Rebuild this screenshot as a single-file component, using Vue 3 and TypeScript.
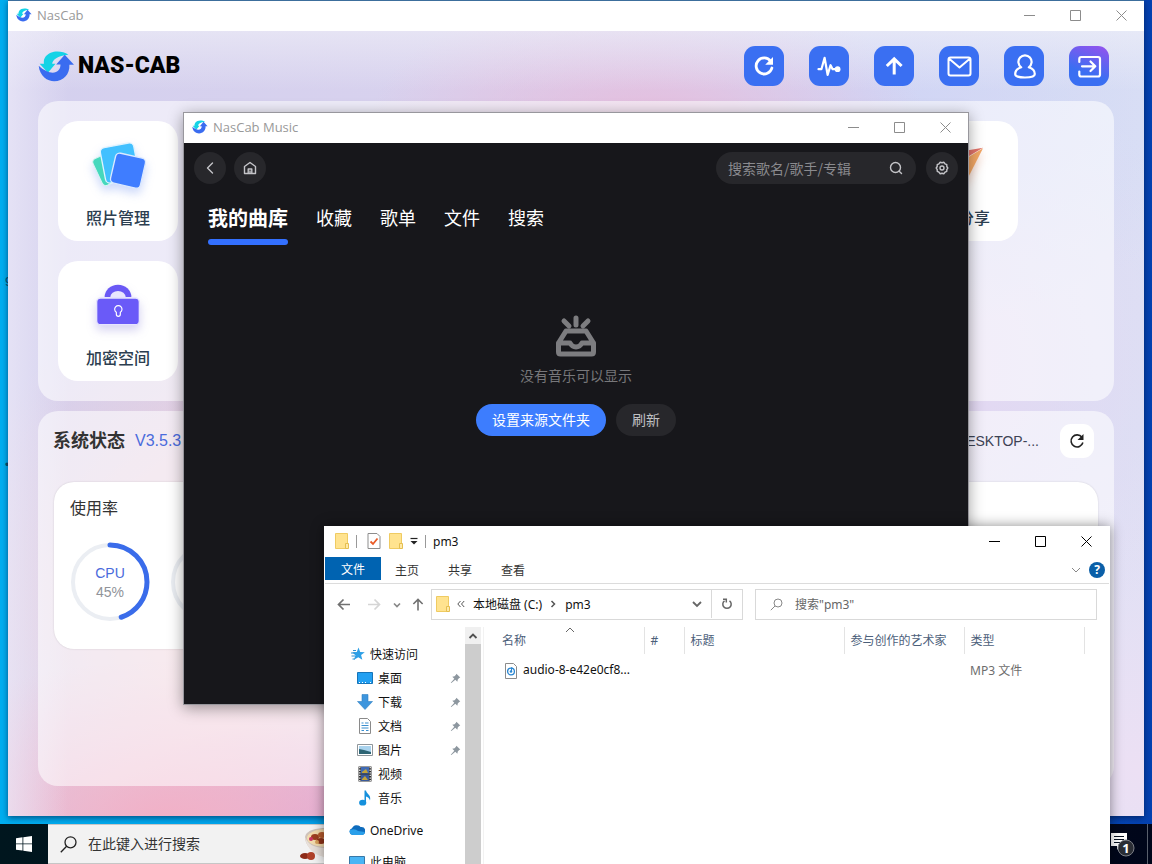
<script setup lang="ts">
import { ref } from 'vue'

interface NavItem { id: string; label: string; pinned: boolean }

const tabs = ['我的曲库', '收藏', '歌单', '文件', '搜索']
const activeTab = ref('我的曲库')
const musicQuery = ref('')
const fileQuery = ref('')
const taskQuery = ref('')
const cpu = ref(45)
const ringLength = 2 * Math.PI * 37

const navItems: NavItem[] = [
  { id: 'desktop', label: '桌面', pinned: true },
  { id: 'download', label: '下载', pinned: true },
  { id: 'document', label: '文档', pinned: true },
  { id: 'picture', label: '图片', pinned: true },
  { id: 'video', label: '视频', pinned: false },
  { id: 'music', label: '音乐', pinned: false },
]
const ribbonTabs = ['主页', '共享', '查看']
const headerActions = ['refresh', 'pulse', 'upload', 'mail', 'user', 'exit']
const actionLabels: Record<string, string> = {
  refresh: '刷新', pulse: '监控', upload: '上传', mail: '消息', user: '用户', exit: '退出',
}
</script>

<template>
  <div class="desktop">
    <span class="shortcut shortcut-a">9</span>
    <span class="shortcut shortcut-b">•</span>

    <section class="window nas">
      <header class="titlebar">
        <svg class="app-mark" viewBox="113 151 112 94">
          <path fill="#14d3e6" d="M205 162C185 148 150 148 136 168C130 176 130 184 131 190H118L143 217L166 190H156C156 178 172 164 205 162Z" />
          <path fill="#3a6cf0" d="M115 196C118 228 142 243 162 243C190 243 210 222 208 193H222L194 162L168 192H181C182 215 155 232 115 196Z" />
        </svg>
        <span class="title">NasCab</span>
        <div class="caption">
          <button aria-label="最小化"><svg viewBox="0 0 11 11"><path d="M0 5.5H11" /></svg></button>
          <button aria-label="最大化"><svg viewBox="0 0 11 11"><path d="M.5 .5H10.5V10.5H.5Z" /></svg></button>
          <button aria-label="关闭"><svg viewBox="0 0 11 11"><path d="M.5 .5L10.5 10.5M10.5 .5L.5 10.5" /></svg></button>
        </div>
      </header>

      <div class="nas-body">
        <div class="nas-top">
          <svg class="brand-mark" viewBox="113 151 112 94">
            <path fill="#14d3e6" d="M205 162C185 148 150 148 136 168C130 176 130 184 131 190H118L143 217L166 190H156C156 178 172 164 205 162Z" />
            <path fill="#3a6cf0" d="M115 196C118 228 142 243 162 243C190 243 210 222 208 193H222L194 162L168 192H181C182 215 155 232 115 196Z" />
          </svg>
          <h1 class="brand">NAS-CAB</h1>
          <nav class="actions">
            <button v-for="a in headerActions" :key="a" class="action" :class="{ exit: a === 'exit' }" :aria-label="actionLabels[a]">
              <svg viewBox="0 0 40 40">
                <g v-if="a === 'refresh'">
                  <path d="M26.6 15.2A8 8 0 1 0 27.9 22" stroke-width="2.8" />
                  <path d="M29 11V18.8H21.2Z" class="solid" />
                </g>
                <g v-else-if="a === 'pulse'">
                  <path d="M9.5 23.2H12.4L15.6 11.8L18.6 28.8L21.6 19.2L23.6 23.2H28" stroke-width="2.2" />
                  <circle cx="28.6" cy="23.2" r="2.9" class="solid" />
                </g>
                <path v-else-if="a === 'upload'" d="M20.2 28.5V13M12.8 20L20.2 12.8L27.6 20" stroke-width="3" stroke-linecap="butt" stroke-linejoin="miter" />
                <path v-else-if="a === 'mail'" d="M11.5 11.5H29.5Q31.5 11.5 31.5 13.5V27.5Q31.5 29.5 29.5 29.5H11.5Q9.5 29.5 9.5 27.5V13.5Q9.5 11.5 11.5 11.5M10.5 13L20.5 21.5L30.5 13" stroke-width="2" />
                <path v-else-if="a === 'user'" d="M17.2 21.3A6.6 6.6 0 1 1 24.8 21.3C28.8 22.6 30.8 25 30.8 28C30.8 30.4 27.5 31.5 21 31.5S11.2 30.4 11.2 28C11.2 25 13.2 22.6 17.2 21.3Z" stroke-width="2.2" />
                <path v-else d="M10.3 16V13Q10.3 11 12.3 11H29Q31 11 31 13V28.5Q31 30.5 29 30.5H12.3Q10.3 30.5 10.3 28.5V25.5M13 20.3H26M21.5 15.5L26.3 20.3L21.5 25" stroke-width="2.2" />
              </svg>
            </button>
          </nav>
        </div>

        <div class="panel apps">
          <a href="#" class="tile">
            <svg viewBox="264 408 180 180">
              <rect x="291" y="464" width="46" height="88" rx="12" fill="#45d8bd" stroke="#d9f5f2" stroke-width="3" transform="rotate(-25 314 508)" />
              <rect x="308" y="432" width="102" height="108" rx="14" fill="#42c0ff" stroke="#dff3ff" stroke-width="4" transform="rotate(-11 359 486)" />
              <rect x="338" y="463" width="92" height="92" rx="13" fill="#3f7dff" stroke="#dbe9ff" stroke-width="4" transform="rotate(13 384 509)" />
            </svg>
            <span>照片管理</span>
          </a>
          <a href="#" class="tile share">
            <svg viewBox="624 408 180 180">
              <path d="M789 440L660 462L706 490Z" fill="#e2736a" />
              <path d="M789 442L736 546L706 492Z" fill="#f3a765" />
            </svg>
            <span>文件分享</span>
          </a>
          <a href="#" class="tile">
            <svg class="violet" viewBox="264 78 180 180">
              <path d="M314 138A40 37 0 0 1 394 138Z" fill="#6a58f5" />
              <path d="M331 138A23 18 0 0 1 377 138Z" fill="#e9e6fd" />
              <rect x="290" y="141" width="128" height="80" rx="12" fill="#6a5af8" stroke="#e6e4ff" stroke-width="4" />
              <path d="M349 184A11 11 0 1 1 361 184V190Q361 196 355 196T349 190Z" fill="none" stroke="#fff" stroke-width="3.5" />
            </svg>
            <span>加密空间</span>
          </a>
        </div>

        <div class="panel status">
          <div class="status-head">
            <h2>系统状态</h2>
            <span class="version">V3.5.3</span>
            <span class="host">DESKTOP-...</span>
            <button class="reload" aria-label="刷新状态">
              <svg viewBox="0 0 18 18"><path d="M13.9 5.3A6 6 0 1 0 14.9 10.5" fill="none" stroke="#222" stroke-width="1.6" /><path d="M15.5 2V8H9.5Z" fill="#222" /></svg>
            </button>
          </div>
          <div class="usage">
            <h3>使用率</h3>
            <div class="rings">
              <div class="ring">
                <svg viewBox="0 0 80 80">
                  <circle cx="40" cy="40" r="37" class="track" />
                  <circle cx="40" cy="40" r="37" class="value" :stroke-dasharray="`${ringLength * cpu / 100} ${ringLength}`" transform="rotate(-90 40 40)" />
                </svg>
                <div class="ring-text"><span class="ring-name">CPU</span><span>{{ cpu }}%</span></div>
              </div>
              <div class="ring">
                <svg viewBox="0 0 80 80"><circle cx="40" cy="40" r="37" class="track" /></svg>
              </div>
            </div>
          </div>
        </div>
      </div>
    </section>

    <footer class="taskbar">
      <button class="start" aria-label="开始">
        <svg viewBox="0 0 16 16"><path fill="#fff" d="M0 2.2L6.5 1.3V7.5H0ZM7.3 1.2L16 0V7.5H7.3ZM0 8.3H6.5V14.6L0 13.7ZM7.3 8.3H16V16L7.3 14.8Z" /></svg>
      </button>
      <label class="task-search">
        <svg viewBox="0 0 17 17"><circle cx="10.5" cy="6.3" r="5.5" /><path d="M6.6 10.3L.8 16.2" /></svg>
        <input v-model="taskQuery" type="text" placeholder="在此键入进行搜索" />
        <svg class="bowl" viewBox="0 0 48 32">
          <path d="M5 10C5 2 17 0 26 0S46 4 46 11C46 22 38 29 28 29S6 20 5 10Z" fill="#cfc3ba" />
          <ellipse cx="26" cy="10" rx="19" ry="9" fill="#f3dcae" />
          <path d="M5 9C9 19 18 20 30 20V29C16 30 6 20 5 9Z" fill="#e8e0da" />
          <ellipse cx="15" cy="9" rx="4" ry="3" fill="#9d3f20" /><ellipse cx="22" cy="7" rx="4" ry="3" fill="#b65a2c" /><ellipse cx="21" cy="13" rx="5" ry="3" fill="#8f3218" />
          <circle cx="11" cy="11" r="2" fill="#c93464" /><circle cx="17" cy="14" r="2" fill="#d9a15c" />
          <ellipse cx="5" cy="28" rx="5" ry="3" fill="#8d2b18" /><ellipse cx="11" cy="28" rx="4" ry="4" fill="#b0412a" />
        </svg>
      </label>
      <button class="notice" aria-label="通知">
        <svg viewBox="0 0 28 26">
          <path d="M1 2H17V15H10L7 19V15H1Z" fill="#fff" />
          <path d="M4 5.5H14M4 8.5H14M4 11.5H10" stroke="#06101f" stroke-width="1.2" />
          <circle cx="16" cy="17" r="8" fill="#2b2e35" stroke="#7d8087" />
          <text x="16" y="22" text-anchor="middle">1</text>
        </svg>
      </button>
    </footer>

    <section class="window music">
      <header class="titlebar">
        <svg class="app-mark" viewBox="113 151 112 94">
          <path fill="#14d3e6" d="M205 162C185 148 150 148 136 168C130 176 130 184 131 190H118L143 217L166 190H156C156 178 172 164 205 162Z" />
          <path fill="#3a6cf0" d="M115 196C118 228 142 243 162 243C190 243 210 222 208 193H222L194 162L168 192H181C182 215 155 232 115 196Z" />
        </svg>
        <span class="title">NasCab Music</span>
        <div class="caption">
          <button aria-label="最小化"><svg viewBox="0 0 11 11"><path d="M0 5.5H11" /></svg></button>
          <button aria-label="最大化"><svg viewBox="0 0 11 11"><path d="M.5 .5H10.5V10.5H.5Z" /></svg></button>
          <button aria-label="关闭"><svg viewBox="0 0 11 11"><path d="M.5 .5L10.5 10.5M10.5 .5L.5 10.5" /></svg></button>
        </div>
      </header>
      <div class="music-bar">
        <button class="round" aria-label="返回"><svg viewBox="0 0 14 14"><path d="M9.5 2L4.5 7L9.5 12" /></svg></button>
        <button class="round" aria-label="主页"><svg viewBox="0 0 14 14"><path d="M1.5 5.5L7 1.5L12.5 5.5V12.5H1.5ZM5.2 12V8H8.8V12M7 10V12" /></svg></button>
        <label class="music-search">
          <input v-model="musicQuery" type="text" placeholder="搜索歌名/歌手/专辑" />
          <svg viewBox="0 0 14 14"><circle cx="6.5" cy="6.5" r="5" /><path d="M10.2 10.2L12.5 12.5" /></svg>
        </label>
        <button class="round" aria-label="设置"><svg viewBox="0 0 14 14"><path d="M5.2 1.3L7 1.7L8.8 1.3L10 2.8L11.8 3.7V5.5L12.8 7L11.8 8.5V10.3L10 11.2L8.8 12.7L7 12.3L5.2 12.7L4 11.2L2.2 10.3V8.5L1.2 7L2.2 5.5V3.7L4 2.8Z" /><circle cx="7" cy="7" r="2" /></svg></button>
      </div>
      <nav class="music-tabs">
        <button v-for="t in tabs" :key="t" :class="{ active: t === activeTab }" @click="activeTab = t">{{ t }}</button>
      </nav>
      <div class="empty">
        <svg viewBox="0 0 42 42">
          <path d="M9 6L14 11M21 3V10M33 6L28 11" />
          <path d="M11 16H31L38.5 28V37Q38.5 39 36.5 39H5.5Q3.5 39 3.5 37V28ZM3.5 28H15Q17 32 21 32T27 28H38.5" />
        </svg>
        <p>没有音乐可以显示</p>
        <div class="empty-actions">
          <button class="primary">设置来源文件夹</button>
          <button class="secondary">刷新</button>
        </div>
      </div>
    </section>

    <section class="window explorer">
      <header class="ex-title">
        <svg class="folder" viewBox="0 0 14 16"><path d="M.5 .5H12.5V15.5H.5Z" fill="#ffe38f" stroke="#efcb62" /><path d="M10.5 10.5H13.5V15.5H10.5Z" fill="#ffe9a8" stroke="#e5bf50" /></svg>
        <i class="rule"></i>
        <svg class="check" viewBox="0 0 14 16"><path d="M1 .5H10L13 3.5V15.5H1Z" fill="#fff" stroke="#8d8d8d" /><path d="M3.5 8.5L6 11L10.5 5.5" fill="none" stroke="#ea5b27" stroke-width="1.8" /></svg>
        <svg class="folder" viewBox="0 0 14 16"><path d="M.5 .5H12.5V15.5H.5Z" fill="#ffe38f" stroke="#efcb62" /><path d="M10.5 10.5H13.5V15.5H10.5Z" fill="#ffe9a8" stroke="#e5bf50" /></svg>
        <svg class="drop" viewBox="0 0 8 8"><path d="M.5 1.5H7.5" stroke="#222" stroke-width="1.2" /><path d="M.5 4H7.5L4 7.5Z" fill="#222" /></svg>
        <i class="rule"></i>
        <span class="ex-name">pm3</span>
        <div class="caption dark">
          <button aria-label="最小化"><svg viewBox="0 0 11 11"><path d="M0 5.5H11" /></svg></button>
          <button aria-label="最大化"><svg viewBox="0 0 11 11"><path d="M.5 .5H10.5V10.5H.5Z" /></svg></button>
          <button aria-label="关闭"><svg viewBox="0 0 11 11"><path d="M.5 .5L10.5 10.5M10.5 .5L.5 10.5" /></svg></button>
        </div>
      </header>
      <nav class="ribbon">
        <button class="file">文件</button>
        <button v-for="r in ribbonTabs" :key="r">{{ r }}</button>
        <svg class="expand" viewBox="0 0 10 10"><path d="M1 3L5 7L9 3" /></svg>
        <button class="help" aria-label="帮助">?</button>
      </nav>
      <div class="ex-bar">
        <button class="nav-btn" aria-label="后退"><svg viewBox="0 0 14 12"><path d="M13 6H1.5M6.5 1L1.5 6L6.5 11" stroke="#707070" /></svg></button>
        <button class="nav-btn" aria-label="前进"><svg viewBox="0 0 14 12"><path d="M1 6H12.5M7.5 1L12.5 6L7.5 11" stroke="#d5d5d5" /></svg></button>
        <button class="nav-btn small" aria-label="历史"><svg viewBox="0 0 8 8"><path d="M1 2.5L4 5.5L7 2.5" stroke="#888" /></svg></button>
        <button class="nav-btn" aria-label="上移"><svg viewBox="0 0 14 14"><path d="M7 13.5V1.5M2 6.5L7 1.5L12 6.5" stroke="#707070" /></svg></button>
        <div class="address">
          <svg class="folder" viewBox="0 0 14 16"><path d="M.5 .5H12.5V15.5H.5Z" fill="#ffe38f" stroke="#efcb62" /><path d="M10.5 10.5H13.5V15.5H10.5Z" fill="#ffe9a8" stroke="#e5bf50" /></svg>
          <svg class="crumb" viewBox="0 0 8 8"><path d="M3.5 1L.8 4L3.5 7M7.2 1L4.5 4L7.2 7" /></svg>
          <a href="#">本地磁盘 (C:)</a>
          <svg class="crumb" viewBox="0 0 8 8"><path d="M2.5 1L5.5 4L2.5 7" stroke-width="1.5" /></svg>
          <a href="#">pm3</a>
          <svg class="chev" viewBox="0 0 10 10"><path d="M1 3L5 7L9 3" /></svg>
          <button class="ex-reload" aria-label="刷新"><svg viewBox="0 0 12 12"><path d="M8.5 2.8A4.2 4.2 0 1 1 3.5 2.8" /><path d="M2 1.3H5.3V4.6" /></svg></button>
        </div>
        <label class="ex-search">
          <svg viewBox="0 0 13 13"><circle cx="8" cy="5" r="4" /><path d="M5 8L.8 12.2" /></svg>
          <input v-model="fileQuery" type="text" placeholder='搜索"pm3"' />
        </label>
      </div>
      <div class="ex-main">
        <ul class="tree">
          <li class="root">
            <svg viewBox="0 0 16 16"><path d="M9.5 1.5L11.2 6L15.8 6.3L12.1 9L13.3 13.8L9.300 11.200L5 13.800L6.400 9.200L3.200 6.300L7.800 6Z" fill="#2d9fe6" /><path d="M2 7H6M2.500 10H6M3.500 13H6M4 4.500H7" stroke="#2d8fd0" /></svg>
            <a href="#">快速访问</a>
          </li>
          <li v-for="n in navItems" :key="n.id">
            <svg viewBox="0 0 16 16">
              <g v-if="n.id === 'desktop'"><path d="M.5 2.5H15.5V13.5H.5Z" fill="#22a0f2" stroke="#1674b8" /><path d="M2 12.5H11M13 12.5H14" stroke="#fff" stroke-dasharray="1 2" /></g>
              <path v-else-if="n.id === 'download'" d="M5 .5H11V7.5H15.5L8 15.5L.5 7.5H5Z" fill="#3d95dd" stroke="#2f7fc3" stroke-width=".6" />
              <g v-else-if="n.id === 'document'"><path d="M2.5 .5H10.5L13.5 3.5V15.5H2.5Z" fill="#fff" stroke="#8a8a8a" /><path d="M4.5 5H6.5M8 5H11.5M4.5 7.5H11.5M4.5 10H11.5M4.5 12.5H7M9 12.5H11.5" stroke="#3b8fd0" stroke-width="1.2" /></g>
              <g v-else-if="n.id === 'picture'"><path d="M.5 2.5H15.5V13.5H.5Z" fill="#fff" stroke="#8f969b" /><path d="M2 4H14V12H2Z" fill="#a9d3ee" /><path d="M2 7L7 8L14 10V12H2Z" fill="#2d6474" /></g>
              <g v-else-if="n.id === 'video'"><path d="M1.5 .5H14.5V15.5H1.5Z" fill="#333" /><path d="M4 1H12V7.5H4Z" fill="#416bb5" /><path d="M4 8.5H12V15H4Z" fill="#3a5a9b" /><path d="M5 6L9 3L11 7H5ZM5 13L8 10L11 14H5Z" fill="#c2a33a" /><path d="M2.8 1V15M13.2 1V15" stroke="#fff" stroke-width="1.2" stroke-dasharray="1.3 1.3" /></g>
              <g v-else><path d="M7.500 .5H9C9.500 4 14.500 5 13 10.500C12.500 8 10.500 7 9 6.500V12.500H7.500Z" fill="#1590dc" /><ellipse cx="5.700" cy="12.700" rx="3.600" ry="2.900" fill="#1590dc" /></g>
            </svg>
            <a href="#">{{ n.label }}</a>
            <svg v-if="n.pinned" class="pin" viewBox="0 0 12 12"><path d="M7 .8L11.2 5L10 5.5L8.5 7L8 9.5L5.8 7.3L1.5 11L.8 10.5L4.7 6.2L2.5 4L5 3.5L6.5 2Z" fill="#8d979f" /></svg>
          </li>
          <li class="root spaced">
            <svg viewBox="0 0 16 16"><path d="M3.5 13A3.5 3.5 0 0 1 3 6.2A5 5 0 0 1 11.5 5A4 4 0 0 1 13 13Z" fill="#0f6cbd" /><path d="M3.5 13A3.5 3.5 0 0 1 1 8Q6 6 9 9L15.8 10Q15.5 13 13 13Z" fill="#2a9fea" /></svg>
            <a href="#">OneDrive</a>
          </li>
          <li class="root spaced">
            <svg viewBox="0 0 16 16"><path d="M.5 2.5H15.5V13.5H.5Z" fill="#49b5f5" stroke="#3778a8" /></svg>
            <a href="#">此电脑</a>
          </li>
        </ul>
        <div class="scroll"><button aria-label="向上滚动"><svg viewBox="0 0 10 10"><path d="M1.5 7L5 3.5L8.5 7" /></svg></button></div>
        <div class="files">
          <table>
            <colgroup><col class="c-name" /><col class="c-num" /><col class="c-wide" /><col class="c-mid" /><col class="c-mid" /></colgroup>
            <thead>
              <tr>
                <th>名称<svg class="sort" viewBox="0 0 10 6"><path d="M1 5L5 1L9 5" /></svg></th>
                <th>#</th><th>标题</th><th>参与创作的艺术家</th><th>类型</th>
              </tr>
            </thead>
            <tbody>
              <tr>
                <td class="file-name">
                  <svg viewBox="0 0 12 16"><path d="M.5 .5H8.5L11.5 3.5V15.5H.5Z" fill="#fff" stroke="#8b8b8b" /><circle cx="6" cy="8.5" r="3.4" fill="none" stroke="#2a86d1" stroke-width="1.3" /><circle cx="6" cy="8.5" r="1.3" fill="#2a86d1" /><path d="M6.5 8V4.5L8.5 6" fill="none" stroke="#2a86d1" /></svg>audio-8-e42e0cf8...
                </td>
                <td></td><td></td><td></td><td class="kind">MP3 文件</td>
              </tr>
            </tbody>
          </table>
        </div>
      </div>
    </section>
  </div>
</template>

<style>
html, body { margin: 0; }
</style>

<style scoped>
.desktop {
  position: relative; height: 100vh; overflow: hidden;
  font-family: "Liberation Sans", "Noto Sans CJK SC", sans-serif;
  background: linear-gradient(90deg, #00aef0 0, #00a4ec 25%, #0a62cc 75%, #0441b0 100%);
}
.desktop *, .desktop *::before, .desktop *::after { box-sizing: border-box; }
button { padding: 0; border: 0; background: none; font: inherit; color: inherit; cursor: pointer; }
input { min-width: 0; border: 0; padding: 0; background: none; outline: none; font: inherit; color: inherit; }
a { color: inherit; text-decoration: none; }
h1, h2, h3, p, ul { margin: 0; padding: 0; }
svg { display: block; flex: none; }
.window { position: absolute; display: flex; flex-direction: column; }
.shortcut { position: absolute; left: 5px; font-size: 13px; line-height: 14px; color: #0a4a6c; }
.shortcut-a { top: 275px; }
.shortcut-b { top: 458px; }

.titlebar {
  display: flex; align-items: center; height: 30px; flex: none; padding: 0 0 2px 8px; background: #fff;
  font-family: "Open Sans", "Noto Sans CJK SC", sans-serif; font-size: 13px; color: #999;
}
.app-mark { width: 16px; height: 14px; margin-right: 5px; }
.caption { display: flex; align-self: stretch; margin-left: auto; }
.caption button { width: 46px; display: grid; place-items: center; }
.caption svg { width: 11px; height: 11px; fill: none; stroke: #8c8c8c; }
.caption.dark svg { stroke: #000; }

.nas {
  left: 8px; right: 8px; top: 0; bottom: 48px; border-top: 1px solid #3c6e9c;
  box-shadow: 0 2px 6px rgba(0, 20, 60, .6);
}
.nas-body {
  flex: 1; min-height: 0; display: flex; flex-direction: column; padding: 15px 30px 30px;
  background:
    linear-gradient(90deg, rgba(240, 238, 250, .6), transparent 60px),
    linear-gradient(180deg, rgba(240, 240, 248, .6), transparent 60px),
    radial-gradient(ellipse 280px 150px at 640px 100px, #e6bcdc, transparent),
    radial-gradient(ellipse 380px 240px at 860px 60px, #d0d5f5, transparent),
    radial-gradient(ellipse 340px 160px at 160px 790px, #f2b0c6, transparent),
    radial-gradient(ellipse 240px 120px at 330px 800px, #d6a8dc, transparent),
    radial-gradient(ellipse 300px 330px at 230px 580px, #f6cfd2, transparent),
    radial-gradient(ellipse 300px 300px at 940px 340px, #e4d8f2, transparent),
    radial-gradient(ellipse 340px 340px at 1130px 740px, #ece0f4, transparent),
    linear-gradient(90deg, #d4d0ee, #d9d2ee 50%, #d9dff4 90%, #dbe1f5);
}
.nas-top { display: flex; align-items: center; height: 40px; padding-right: 5px; }
.brand-mark { width: 37px; height: 31px; }
.brand { margin-left: 3px; font: 900 23px/30px Roboto, sans-serif; color: #000; }
.actions { display: flex; gap: 25px; margin-left: auto; }
.action { width: 40px; height: 40px; border-radius: 11px; background: #3a6ff2; }
.action.exit { background: linear-gradient(200deg, #8c55ee 8%, #3a6ff2 65%); }
.action svg { width: 40px; height: 40px; fill: none; stroke: #fff; stroke-linejoin: round; stroke-linecap: round; }
.action .solid { fill: #fff; stroke: none; }

.panel { border-radius: 20px; background: rgba(255, 255, 255, .56); }
.apps {
  flex: none; display: grid; grid-template-columns: repeat(auto-fill, 120px); grid-auto-rows: 120px;
  gap: 20px; margin-top: 15px; padding: 20px;
}
.tile {
  display: flex; flex-direction: column; align-items: center; gap: 10px; padding-top: 16px;
  border-radius: 20px; background: #fff; font-size: 16px; line-height: 24px; font-weight: 500; color: #2c3e50;
}
.tile.share { grid-column: 7; }
.tile svg { width: 60px; height: 60px; filter: drop-shadow(0 5px 5px rgba(90, 130, 240, .3)); }
.tile svg.violet { filter: drop-shadow(0 5px 5px rgba(90, 80, 200, .25)); }
.tile.share svg { filter: drop-shadow(0 5px 5px rgba(240, 140, 100, .3)); }
.status { flex: 1; min-height: 0; margin-top: 10px; padding: 13px 15px; }
.status-head { display: flex; align-items: center; height: 34px; padding-right: 5px; color: #333; }
.status-head h2 { font-size: 18px; line-height: 24px; }
.version { margin-left: 10px; font-size: 16px; color: #4a6bdc; }
.host { margin-left: auto; font-size: 14px; color: #3d4254; }
.reload { display: grid; place-items: center; width: 34px; height: 34px; margin-left: 21px; border-radius: 11px; background: #fff; }
.reload svg { width: 18px; height: 18px; }
.usage { height: 167px; margin: 24px 1px 0; padding: 15px 16px; border-radius: 20px; background: #fff; box-shadow: 0 0 2px rgba(0, 0, 0, .15); color: #333; }
.usage h3 { font-size: 16px; font-weight: 400; line-height: 24px; }
.rings { display: flex; gap: 20px; margin-top: 21px; }
.ring { display: grid; place-items: center; width: 80px; height: 80px; }
.ring > * { grid-area: 1 / 1; }
.ring svg { width: 80px; height: 80px; fill: none; }
.track { stroke: #ebeef3; stroke-width: 4; }
.value { stroke: #3a6cea; stroke-width: 5; stroke-linecap: round; }
.ring-text { display: flex; flex-direction: column; align-items: center; padding-top: 2px; font-size: 14px; line-height: 19px; color: #909399; }
.ring-name { color: #4a6bdc; }

.taskbar {
  position: absolute; left: 0; right: 0; bottom: 0; height: 40px; display: flex;
  background: linear-gradient(90deg, #00161e, #00061a);
}
.start { display: grid; place-items: center; width: 48px; }
.start svg { width: 16px; height: 16px; }
.task-search { display: flex; align-items: center; width: 344px; padding-left: 12px; border: 1px solid #c6c6c6; border-left: 0; background: #f2f2f2; color: #222; }
.task-search svg { width: 17px; height: 17px; fill: none; stroke: #222; stroke-width: 1.3; }
.task-search input { width: 200px; margin-left: 11px; font-size: 14px; }
.task-search input::placeholder { color: #333; opacity: 1; }
.task-search svg.bowl { width: 48px; height: 32px; margin-left: 12px; stroke: none; }
.notice { width: 43px; height: 40px; margin-left: auto; border-right: 1px solid #59606c; margin-right: 4px; padding-left: 5px; }
.notice svg { width: 28px; height: 26px; }
.notice text { font: 700 13px "Open Sans", sans-serif; fill: #fff; }

.music {
  left: 183px; right: 183px; top: 112px; height: 593px; border: 1px solid #98979d;
  background: #17171b; box-shadow: 0 3px 14px rgba(0, 0, 0, .38);
}
.music-bar { display: flex; align-items: center; gap: 8px; padding: 9px 10px 0; color: #9a9a9e; }
.round { display: grid; place-items: center; width: 32px; height: 32px; border-radius: 50%; background: #27272b; }
.round svg, .music-search svg { width: 14px; height: 14px; fill: none; stroke: #c4c4c8; stroke-width: 1.4; stroke-linejoin: round; stroke-linecap: round; }
.music-search { display: flex; align-items: center; width: 200px; height: 32px; margin: 0 2px 0 auto; padding: 0 13px 0 12px; border-radius: 16px; background: #27272b; }
.music-search input { flex: 1; font-family: "Noto Sans CJK SC", sans-serif; font-size: 14px; }
.music-search input::placeholder { color: #8a8a8e; opacity: 1; }
.music-tabs { display: flex; gap: 28px; margin-top: 19px; padding: 0 24px; color: #fff; font-size: 18px; }
.music-tabs button { height: 42px; padding-bottom: 10px; line-height: 32px; }
.music-tabs .active { position: relative; font-size: 20px; font-weight: 700; }
.music-tabs .active::after { content: ""; position: absolute; left: 0; right: 0; bottom: 0; height: 6px; border-radius: 3px; background: #3370ff; }
.empty { display: flex; flex-direction: column; align-items: center; margin-top: 70px; font-size: 14px; color: #77777a; }
.empty > svg { width: 42px; height: 42px; fill: none; stroke: #7d7d80; stroke-width: 5; stroke-linecap: round; stroke-linejoin: round; }
.empty p { margin-top: 9px; line-height: 20px; }
.empty-actions { display: flex; gap: 10px; margin-top: 18px; }
.empty-actions button { height: 32px; padding: 0 16px 2px; border-radius: 16px; }
.primary { background: #3d7dfe; color: #fff; }
.secondary { background: #27272b; color: #c0c0c3; }

.explorer {
  left: 324px; right: 42px; top: 526px; bottom: 0; overflow: hidden; background: #fff;
  border: 0 solid #fff; border-width: 0 1px; box-shadow: 0 0 12px rgba(0, 0, 0, .45);
  font-family: "Noto Sans", "Noto Sans CJK SC", sans-serif; font-size: 12px; color: #111;
}
.ex-title { display: flex; align-items: center; flex: none; height: 31px; padding: 0 0 1px 10px; }
.folder { width: 14px; height: 16px; }
.rule { width: 1px; height: 13px; background: #999; margin-left: 7px; }
.check { width: 14px; height: 16px; margin: 0 8px 0 10px; }
.drop { width: 8px; height: 8px; margin-left: 7px; }
.ex-name { margin-left: 7px; }
.ribbon { display: flex; align-items: center; flex: none; height: 27px; border-bottom: 1px solid #dcdcdc; color: #333; }
.ribbon button { height: 24px; margin-left: 29px; }
.ribbon .file { align-self: flex-start; width: 56px; height: 23px; margin: 0 -15px 0 0; background: #0063b1; color: #fff; }
.expand, .chev { width: 10px; height: 10px; fill: none; stroke: #888; margin-left: auto; }
.ribbon .help { width: 16px; height: 16px; margin: 0 4px 0 8px; border-radius: 50%; background: #0a5fa8; color: #fff; font-weight: 700; line-height: 16px; }
.ex-bar { display: flex; align-items: center; flex: none; padding: 5px 12px 0; height: 36px; }
.nav-btn { display: grid; place-items: center; width: 14px; height: 24px; margin-right: 16px; }
.nav-btn svg { width: 14px; height: 13px; fill: none; stroke-width: 1.7; }
.nav-btn.small { width: 8px; margin: 0 10px 0 -4px; }
.nav-btn.small svg { width: 8px; height: 8px; }
.nav-btn:nth-child(4) { margin-right: 6px; }
.address { display: flex; align-items: center; width: 312px; height: 31px; border: 1px solid #d9d9d9; padding: 0 0 1px 4px; color: #111; }
.address .crumb { width: 8px; height: 8px; fill: none; stroke: #555; margin: 0 8px 0 7px; }
.chev { stroke: #666; stroke-width: 1.8; }
.ex-reload { display: grid; place-items: center; align-self: stretch; width: 31px; margin-left: 9px; border-left: 1px solid #d9d9d9; }
.ex-reload svg { width: 12px; height: 12px; fill: none; stroke: #666; stroke-width: 1.5; }
.ex-search { display: flex; align-items: center; flex: 1; height: 31px; margin-left: 12px; padding-left: 14px; border: 1px solid #d9d9d9; color: #666; }
.ex-search svg { width: 13px; height: 13px; fill: none; stroke: #888; }
.ex-search input { flex: 1; margin-left: 12px; }
.ex-search input::placeholder { color: #666; opacity: 1; }
.ex-main { flex: 1; min-height: 0; display: flex; padding-top: 7px; }
.tree { width: 140px; padding-top: 15px; list-style: none; }
.tree li { display: flex; align-items: center; height: 24px; padding: 0 4px 0 32px; }
.tree .root { padding-left: 24px; }
.tree .spaced { margin-top: 8px; }
.tree svg { width: 16px; height: 16px; margin-right: 5px; }
.tree svg.pin { width: 11px; height: 11px; margin: 0 0 0 auto; }
.scroll { width: 16px; background: #cdcdcd; }
.scroll button { display: grid; place-items: center; width: 16px; height: 17px; background: #f0f0f0; }
.scroll svg { width: 10px; height: 10px; fill: none; stroke: #505050; stroke-width: 1.8; }
.files { flex: 1; min-width: 0; margin-left: 2px; border-left: 1px solid #f2f2f2; }
table { width: 600px; table-layout: fixed; border-collapse: collapse; }
.c-name { width: 160px; } .c-num { width: 40px; } .c-wide { width: 160px; } .c-mid { width: 120px; }
th { position: relative; height: 27px; padding: 0 0 1px 6px; border-right: 1px solid #e3e3e3; text-align: left; font-weight: 400; color: #4c607a; white-space: nowrap; }
th:first-child { padding-left: 18px; }
.sort { position: absolute; left: 81px; top: 0; width: 10px; height: 6px; fill: none; stroke: #666; }
td { height: 32px; padding: 0 0 0 6px; white-space: nowrap; }
.file-name { padding-left: 21px; }
.file-name svg { display: inline-block; width: 12px; height: 16px; margin-right: 6px; vertical-align: middle; }
.kind { color: #6d6d6d; }
</style>
